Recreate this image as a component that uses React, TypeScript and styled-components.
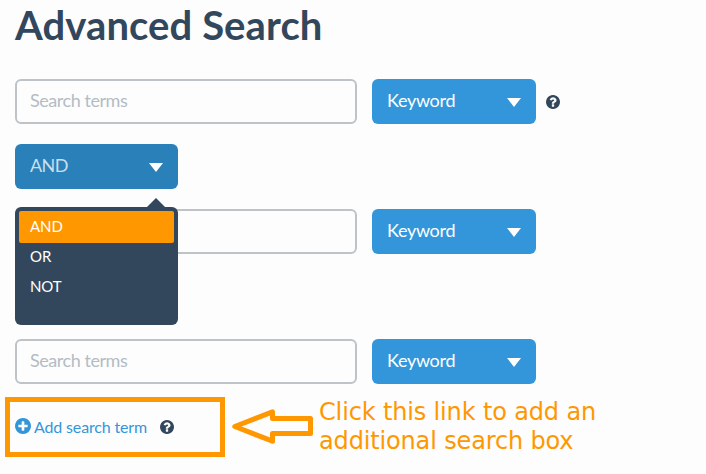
import React from "react";
import styled, { createGlobalStyle, css } from "styled-components";

const navy = "#33475c";
const blue = "#3396da";
const orange = "#ff9800";

const GlobalStyle = createGlobalStyle`
  * { box-sizing: border-box; }
  body {
    margin: 0;
    background: #fdfdfd;
    font-family: Lato, "Liberation Sans", sans-serif;
    overflow: hidden;
  }
`;

const Page = styled.main`
  height: 474px;
  padding: 1px 5px 0;
  overflow: hidden;
`;

const Title = styled.h1`
  margin: 0 0 30px 10px;
  height: 48px;
  color: ${navy};
  font-size: 40px;
  font-weight: 700;
  line-height: 48px;
  letter-spacing: 0.1px;
`;

const Form = styled.form`
  display: flex;
  flex-direction: column;
  gap: 20px;
  padding-left: 10px;
`;

const Row = styled.div`
  display: flex;
  align-items: center;
  height: 45px;
`;

const SearchInput = styled.input`
  width: 342px;
  height: 45px;
  margin-right: 15px;
  padding: 0 13px 3px;
  border: 2px solid #bdc3c7;
  border-radius: 6px;
  background: #fdfdfd;
  outline: none;
  color: ${navy};
  font: 400 18px Lato, sans-serif;
  letter-spacing: -0.45px;
  &::placeholder { color: #b2bcc5; opacity: 1; }
`;

const Select = styled.button<{ $open?: boolean; $narrow?: boolean }>`
  display: flex;
  align-items: center;
  justify-content: space-between;
  width: ${(p) => (p.$narrow ? 163 : 164)}px;
  height: 45px;
  padding: 0 15px;
  border: 0;
  border-radius: 6px;
  background: ${(p) => (p.$open ? "#2a80b9" : blue)};
  color: #fff;
  font: 400 18px/22px Lato, sans-serif;
  letter-spacing: -0.3px;
`;

const SelectLabel = styled.span<{ $dim?: boolean }>`
  padding-bottom: 3px;
  ${(p) => p.$dim && css`
    color: rgba(255, 255, 255, 0.75);
    letter-spacing: -0.6px;
  `}
`;

const Caret = styled.span`
  width: 0;
  height: 0;
  margin-top: 1px;
  border: solid transparent;
  border-width: 9px 7px 0;
  border-top-color: #fff;
`;

const SelectWrap = styled.div`
  position: relative;
`;

const Menu = styled.ul`
  position: absolute;
  z-index: 2;
  top: 63px;
  left: 0;
  width: 163px;
  height: 118px;
  margin: 0;
  padding: 4px;
  border-radius: 6px;
  background: ${navy};
  list-style: none;
  &::before {
    content: "";
    position: absolute;
    top: -9px;
    right: 13px;
    border: solid transparent;
    border-width: 0 9px 9px;
    border-bottom-color: ${navy};
  }
`;

const Option = styled.li<{ $active?: boolean }>`
  height: 30px;
  padding-left: 11px;
  border-radius: 2px;
  color: #fff;
  font-size: 15px;
  line-height: 28px;
  letter-spacing: -0.1px;
  ${(p) => p.$active && css`
    height: 32px;
    margin-bottom: -1px;
    background: ${orange};
    line-height: 30px;
  `}
`;

const HelpIcon = styled.svg`
  flex: none;
  width: 14px;
  height: 14px;
  fill: ${navy};
`;

const RowHelp = styled.span`
  display: flex;
  margin-left: 10px;
`;

const Footer = styled.div`
  display: flex;
  align-items: flex-start;
  margin-top: 13px;
`;

const Highlight = styled.div`
  display: flex;
  align-items: center;
  width: 220px;
  height: 60px;
  padding: 0 5px;
  border: 5px solid ${orange};
`;

const AddLink = styled.a`
  display: flex;
  align-items: center;
  width: 145px;
  color: ${blue};
  font-size: 16px;
  line-height: 20px;
  letter-spacing: -0.15px;
  white-space: nowrap;
`;

const PlusIcon = styled.svg`
  flex: none;
  width: 16px;
  height: 16px;
  margin: 0 3px 2px 0;
  fill: ${blue};
`;

const ArrowIcon = styled.svg`
  flex: none;
  width: 86px;
  height: 40px;
  margin: 9px 0 0 5px;
  fill: none;
  stroke: ${orange};
  stroke-width: 5;
`;

const Note = styled.p`
  margin: 1px 0 0 3px;
  color: ${orange};
  font: 400 24px/29px "DejaVu Sans", sans-serif;
  white-space: nowrap;
`;

const NoteLine = styled.span`
  display: block;
  letter-spacing: -0.15px;
`;

const disc =
  "M1664 896q0 209-103 385.5t-279.5 279.5-385.5 103-385.5-103-279.5-279.5-103-385.5 103-385.5 279.5-279.5 385.5-103 385.5 103 279.5 279.5 103 385.5z";

const Help = () => (
  <HelpIcon viewBox="128 128 1536 1536" fillRule="evenodd" aria-label="Help">
    <path
      d={
        "M1024 1376v-192q0-14-9-23t-23-9h-192q-14 0-23 9t-9 23v192q0 14 9 23t23 9h192q14 0 23-9t9-23zm256-672q0-88-55.5-163t-138.5-116-170-41q-243 0-371 213-15 24 8 42l132 100q7 6 19 6 16 0 25-12 53-68 86-92 34-24 86-24 48 0 85.5 26t37.5 59q0 38-20 61t-68 45q-63 28-115.5 86.5t-52.5 125.5v36q0 14 9 23t23 9h192q14 0 23-9t9-23q0-19 21.5-49.5t54.5-49.5q32-18 49-28.5t46-35 44.5-48 28-60.5 12.5-81z" +
        disc
      }
    />
  </HelpIcon>
);

const Plus = () => (
  <PlusIcon viewBox="128 128 1536 1536" fillRule="evenodd" aria-hidden>
    <path
      d={
        "M1344 960v-128q0-26-19-45t-45-19h-256v-256q0-26-19-45t-45-19h-128q-26 0-45 19t-19 45v256h-256q-26 0-45 19t-19 45v128q0 26 19 45t45 19h256v256q0 26 19 45t45 19h128q26 0 45-19t19-45v-256h256q26 0 45-19t19-45z" +
        disc
      }
    />
  </PlusIcon>
);

const SearchRow = ({ help }: { help?: boolean }) => (
  <Row>
    <SearchInput placeholder="Search terms" />
    <Select type="button">
      <SelectLabel>Keyword</SelectLabel>
      <Caret />
    </Select>
    {help && (
      <RowHelp>
        <Help />
      </RowHelp>
    )}
  </Row>
);

const OperatorRow = () => (
  <Row>
    <SelectWrap>
      <Select type="button" $narrow $open>
        <SelectLabel $dim>AND</SelectLabel>
        <Caret />
      </Select>
      <Menu>
        <Option $active>AND</Option>
        <Option>OR</Option>
        <Option>NOT</Option>
      </Menu>
    </SelectWrap>
  </Row>
);

export default function App() {
  return (
    <>
      <GlobalStyle />
      <Page>
        <Title>Advanced Search</Title>
        <Form>
          <SearchRow help />
          <OperatorRow />
          <SearchRow />
          <Row />
          <SearchRow />
        </Form>
        <Footer>
          <Highlight>
            <AddLink>
              <Plus />
              Add search term
            </AddLink>
            <Help />
          </Highlight>
          <ArrowIcon viewBox="230 406 86 40">
            <path d="M234.8 426.5 L272.5 411.8 V418.5 H310.5 V433.5 H272.5 V441.2 Z" strokeLinejoin="round" />
          </ArrowIcon>
          <Note>
            <NoteLine>Click this link to add an</NoteLine>
            <NoteLine>additional search box</NoteLine>
          </Note>
        </Footer>
      </Page>
    </>
  );
}
